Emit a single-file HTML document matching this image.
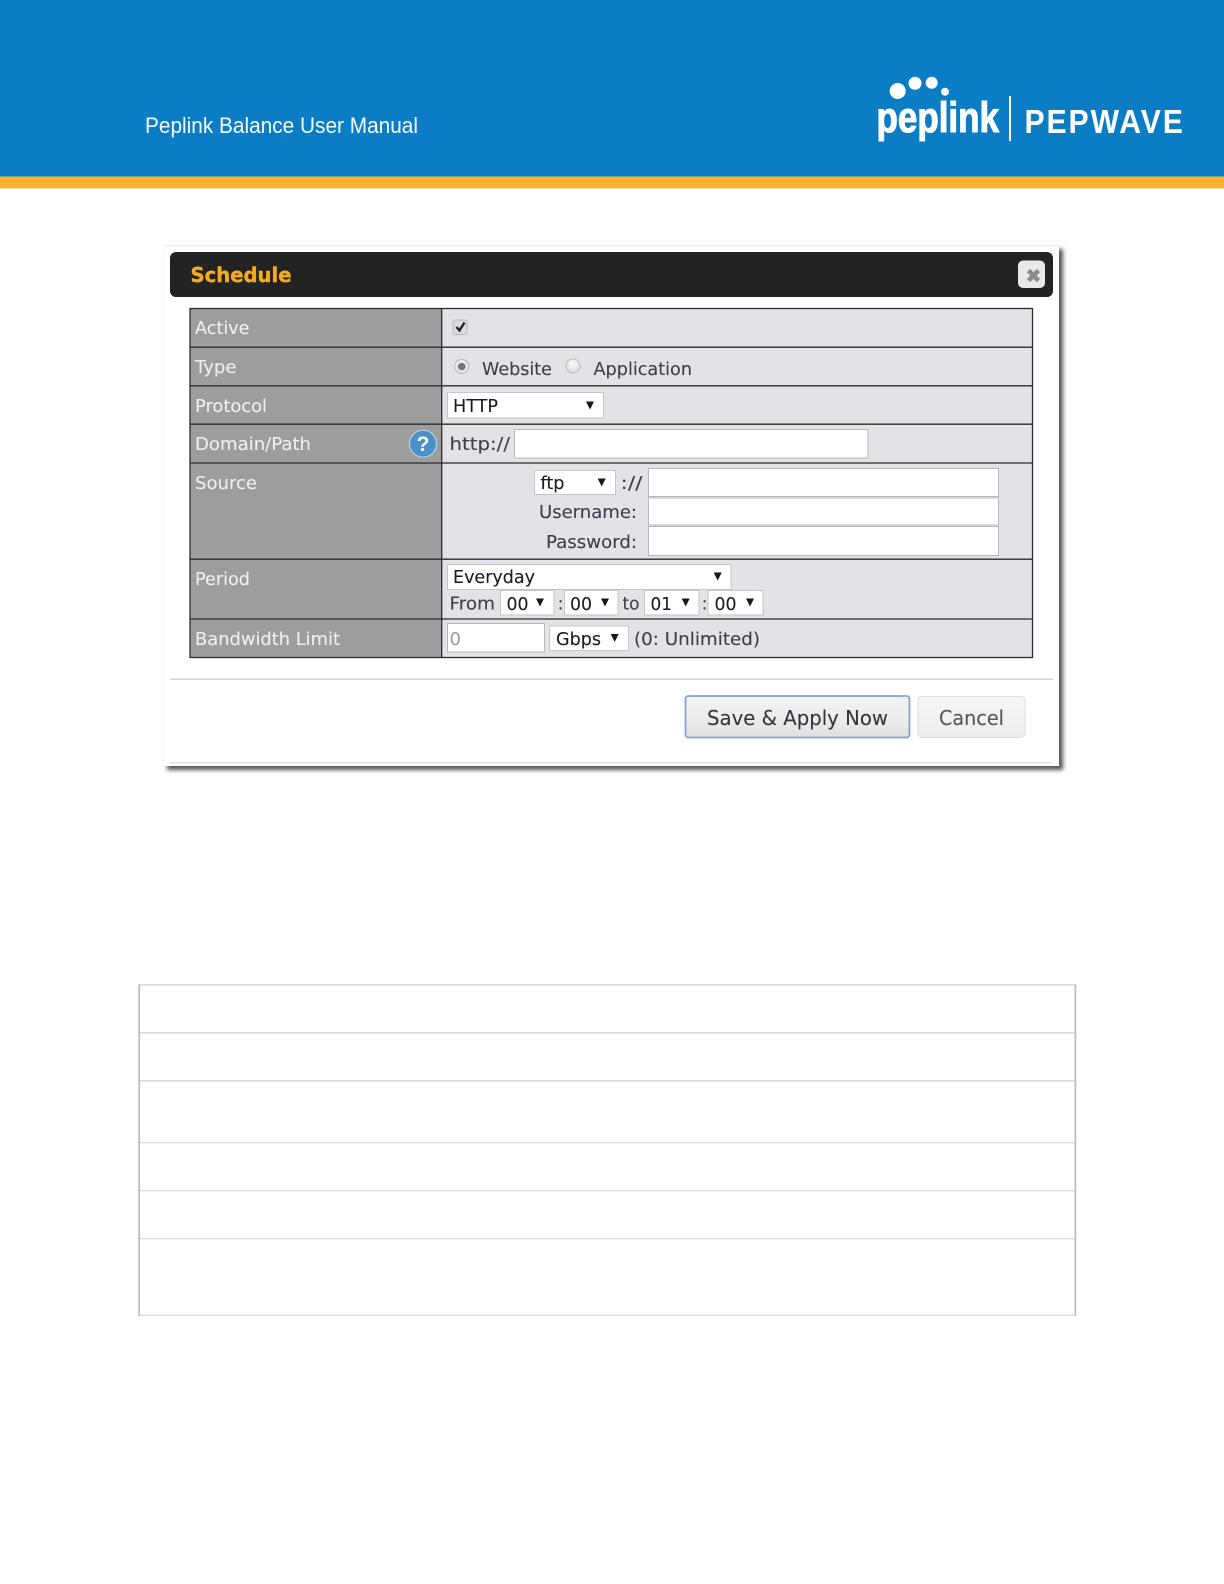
<!DOCTYPE html>
<html lang="en"><head><meta charset="utf-8"><title>Peplink Balance User Manual</title>
<style>
html,body{margin:0;padding:0;background:#fff;width:1224px;height:1584px;overflow:hidden}
svg{display:block}
text{font-family:"DejaVu Sans",sans-serif;font-size:18px;fill:#3d4048}
.l{fill:#efefef}
.s{fill:#1a1c22}
.soft{filter:blur(.35px)}
.soft text{stroke:currentColor;stroke-width:.12px}
</style></head><body>
<svg width="1224" height="1584" viewBox="0 0 1224 1584" xmlns="http://www.w3.org/2000/svg">
<defs>
<filter id="sh" x="-5%" y="-5%" width="110%" height="110%"><feGaussianBlur stdDeviation="2"/></filter>
<linearGradient id="btn" x1="0" y1="0" x2="0" y2="1"><stop offset="0" stop-color="#f3f3f3"/><stop offset=".55" stop-color="#ececec"/><stop offset="1" stop-color="#e0e0e0"/></linearGradient>
<linearGradient id="btn2" x1="0" y1="0" x2="0" y2="1"><stop offset="0" stop-color="#f7f7f7"/><stop offset="1" stop-color="#ededed"/></linearGradient>
<radialGradient id="rad" cx=".5" cy=".35" r=".7"><stop offset="0" stop-color="#fafafa"/><stop offset="1" stop-color="#d8d8d8"/></radialGradient>
</defs>

<!-- header -->
<rect x="0" y="0" width="1224" height="177" fill="#0b7dc4"/>
<rect x="0" y="176.5" width="1224" height="12" fill="#fdb034"/>
<text x="145" y="133" textLength="273" lengthAdjust="spacingAndGlyphs" style="font-family:'Liberation Sans',sans-serif;font-size:22px;fill:#f4fbff">Peplink Balance User Manual</text>
<circle cx="897.7" cy="91" r="8" fill="#fff"/>
<circle cx="915" cy="83.3" r="6.5" fill="#fff"/>
<circle cx="931.7" cy="82.7" r="6" fill="#fff"/>
<circle cx="945" cy="91.7" r="4" fill="#fff"/>
<text x="876.5" y="132" textLength="122.5" lengthAdjust="spacingAndGlyphs" style="font-family:'Liberation Sans',sans-serif;font-size:43px;font-weight:bold;fill:#fff;stroke:#fff;stroke-width:1.1px">peplink</text>
<rect x="1009" y="96" width="2" height="45" fill="#fff"/>
<text transform="translate(1024.5 133) scale(.9 1)" x="0" y="0" textLength="176" lengthAdjust="spacing" style="font-family:'Liberation Sans',sans-serif;font-size:33.5px;font-weight:bold;fill:#fff">PEPWAVE</text>

<!-- dialog -->
<rect x="167" y="249" width="896" height="521" fill="#555" filter="url(#sh)"/>
<rect x="164" y="245" width="895" height="521" fill="#fff"/>
<rect x="164" y="245" width="895" height="1.5" fill="#f0f0f0"/>
<rect x="170" y="252" width="883" height="45" rx="6" fill="#232323"/>
<text x="190.5" y="282" textLength="101" lengthAdjust="spacingAndGlyphs" style="font-size:20px;font-weight:bold;fill:#f8ab1e;stroke:#f8ab1e;stroke-width:.4px">Schedule</text>
<rect x="1018" y="260.5" width="27" height="27.5" rx="5" fill="#e9e9e9"/>
<path d="M1028.5 270.5l10 10M1038.5 270.5l-10 10" stroke="#8a8a8a" stroke-width="4.5" fill="none"/>

<!-- table -->
<rect x="190" y="308.5" width="842.5" height="349" fill="#e3e3e7"/>
<rect x="190" y="308.5" width="252" height="349" fill="#9d9d9d"/>
<g stroke="#2c2c2c" stroke-width="1.3" fill="none">
<rect x="190" y="308.5" width="842.5" height="349"/>
<path d="M441.7 308.5V657.5M190 347.2H1032.5M190 385.8H1032.5M190 424.2H1032.5M190 463H1032.5M190 559.2H1032.5M190 619H1032.5"/>
</g>

<g class="soft">
<g color="#efefef">
<text class="l" x="195" y="334" textLength="54.5" lengthAdjust="spacingAndGlyphs">Active</text>
<text class="l" x="195" y="373" textLength="41.5" lengthAdjust="spacingAndGlyphs">Type</text>
<text class="l" x="195" y="412" textLength="72" lengthAdjust="spacingAndGlyphs">Protocol</text>
<text class="l" x="195" y="450" textLength="116" lengthAdjust="spacingAndGlyphs">Domain/Path</text>
<text class="l" x="195" y="489" textLength="62" lengthAdjust="spacingAndGlyphs">Source</text>
<text class="l" x="195" y="585" textLength="55" lengthAdjust="spacingAndGlyphs">Period</text>
<text class="l" x="195" y="645" textLength="145" lengthAdjust="spacingAndGlyphs">Bandwidth Limit</text>
</g>

<!-- help -->
<circle cx="423" cy="443.7" r="13.5" fill="#4d8fc9" stroke="#b5d2ea" stroke-width="1.2"/>
<text x="423" y="451" text-anchor="middle" style="font-family:'Liberation Sans',sans-serif;font-size:21px;font-weight:bold;fill:#fff;stroke:none">?</text>

<!-- checkbox and radios -->
<rect x="453" y="320" width="14" height="14.5" rx="2.5" fill="#dcdcdc" stroke="#b4b4b4"/>
<path d="M456.5 327l3 3.5 5-8" stroke="#222" stroke-width="2.4" fill="none"/>
<circle cx="461.7" cy="366.5" r="7" fill="url(#rad)" stroke="#b9b9b9"/>
<circle cx="461.7" cy="366.5" r="3.8" fill="#757575"/>
<circle cx="573" cy="366" r="7" fill="url(#rad)" stroke="#b9b9b9"/>
<g color="#3d4048">
<text x="482" y="375" textLength="70" lengthAdjust="spacingAndGlyphs">Website</text>
<text x="593.5" y="375" textLength="98.5" lengthAdjust="spacingAndGlyphs">Application</text>
</g>

<!-- selects -->
<g fill="#fff" stroke="#c6c6c6">
<rect x="447.5" y="392.5" width="156" height="25.5"/>
<rect x="514.5" y="429.5" width="353.5" height="28.5" stroke="#b8b8b8"/>
<rect x="534.5" y="470.5" width="81" height="24"/>
<rect x="648.5" y="468.5" width="350" height="28" stroke="#b8b8b8"/>
<rect x="648.5" y="498" width="350" height="27" stroke="#b8b8b8"/>
<rect x="648.5" y="526.5" width="350" height="29" stroke="#b8b8b8"/>
<rect x="447.5" y="564.5" width="283.5" height="25"/>
<rect x="500.5" y="590.5" width="53.5" height="24.5"/>
<rect x="564.5" y="590.5" width="53.5" height="24.5"/>
<rect x="644.5" y="590.5" width="54.5" height="24.5"/>
<rect x="708" y="590.5" width="55" height="24.5"/>
<rect x="447.5" y="623.5" width="97" height="28.5" stroke="#b8b8b8"/>
<rect x="549.5" y="626" width="79" height="24.5"/>
</g>
<g fill="#16181c">
<path d="M586 401.5h8l-4 8z"/>
<path d="M597.7 478.5h8l-4 8z"/>
<path d="M713.7 572.5h8l-4 8z"/>
<path d="M536 598.5h8l-4 8z"/>
<path d="M601 598.5h8l-4 8z"/>
<path d="M681.7 598.5h8l-4 8z"/>
<path d="M746 598.5h8l-4 8z"/>
<path d="M610.7 634h8l-4 8z"/>
</g>
<g color="#1a1c22">
<text class="s" x="453" y="412" textLength="45" lengthAdjust="spacingAndGlyphs">HTTP</text>
<text class="s" x="540.5" y="489" textLength="24" lengthAdjust="spacingAndGlyphs">ftp</text>
<text class="s" x="453" y="583" textLength="82" lengthAdjust="spacingAndGlyphs">Everyday</text>
<text class="s" x="506.5" y="610" textLength="22" lengthAdjust="spacingAndGlyphs">00</text>
<text class="s" x="570" y="610" textLength="22" lengthAdjust="spacingAndGlyphs">00</text>
<text class="s" x="650.5" y="610" textLength="21.5" lengthAdjust="spacingAndGlyphs">01</text>
<text class="s" x="714.5" y="610" textLength="22" lengthAdjust="spacingAndGlyphs">00</text>
<text class="s" x="556" y="645" textLength="45" lengthAdjust="spacingAndGlyphs">Gbps</text>
</g>
<g color="#3d4048">
<text x="449.5" y="450" textLength="60.5" lengthAdjust="spacingAndGlyphs">http://</text>
<text x="620.5" y="489" textLength="22" lengthAdjust="spacingAndGlyphs">://</text>
<text x="539" y="518" textLength="98" lengthAdjust="spacingAndGlyphs">Username:</text>
<text x="546" y="548" textLength="91" lengthAdjust="spacingAndGlyphs">Password:</text>
<text x="449.5" y="609.5" textLength="45.5" lengthAdjust="spacingAndGlyphs">From</text>
<text x="557.5" y="609.5">:</text>
<text x="622.5" y="609.5" textLength="17" lengthAdjust="spacingAndGlyphs">to</text>
<text x="701.5" y="609.5">:</text>
<text x="634" y="645" textLength="126" lengthAdjust="spacingAndGlyphs">(0: Unlimited)</text>
</g>
<text x="449.5" y="645" style="fill:#9a9a9a;stroke:none">0</text>

<!-- footer of dialog -->
<rect x="170" y="678.5" width="883" height="1.5" fill="#d2d2d2"/>
<rect x="685.5" y="696" width="224" height="41.5" rx="3" fill="url(#btn)" stroke="#7fa5dc" stroke-width="1.8"/>
<rect x="918" y="696.5" width="107" height="41" rx="4" fill="url(#btn2)" stroke="#dddddd"/>
<g color="#33363c"><text x="707" y="725" textLength="181" lengthAdjust="spacingAndGlyphs" style="font-size:20px;fill:#33363c">Save &amp; Apply Now</text></g>
<g color="#55585e"><text x="939" y="725" textLength="65" lengthAdjust="spacingAndGlyphs" style="font-size:20px;fill:#55585e">Cancel</text></g>
<rect x="170" y="762" width="883" height="1.5" fill="#e2e2e2"/>
</g>

<!-- lower empty table -->
<g fill="#dcdcec">
<rect x="139" y="984" width="936" height="1.6"/>
<rect x="139" y="1032" width="936" height="1.6"/>
<rect x="139" y="1080" width="936" height="1.6"/>
<rect x="139" y="1142" width="936" height="1.4"/>
<rect x="139" y="1190" width="936" height="1.4"/>
<rect x="139" y="1238" width="936" height="1.4"/>
<rect x="139" y="1314.5" width="936" height="1.6"/>
</g>
<rect x="138.3" y="984.5" width="1.7" height="331.5" fill="#bcbcc0"/>
<rect x="1074.5" y="984.5" width="1.7" height="331.5" fill="#bcbcc0"/>
</svg>
</body></html>
